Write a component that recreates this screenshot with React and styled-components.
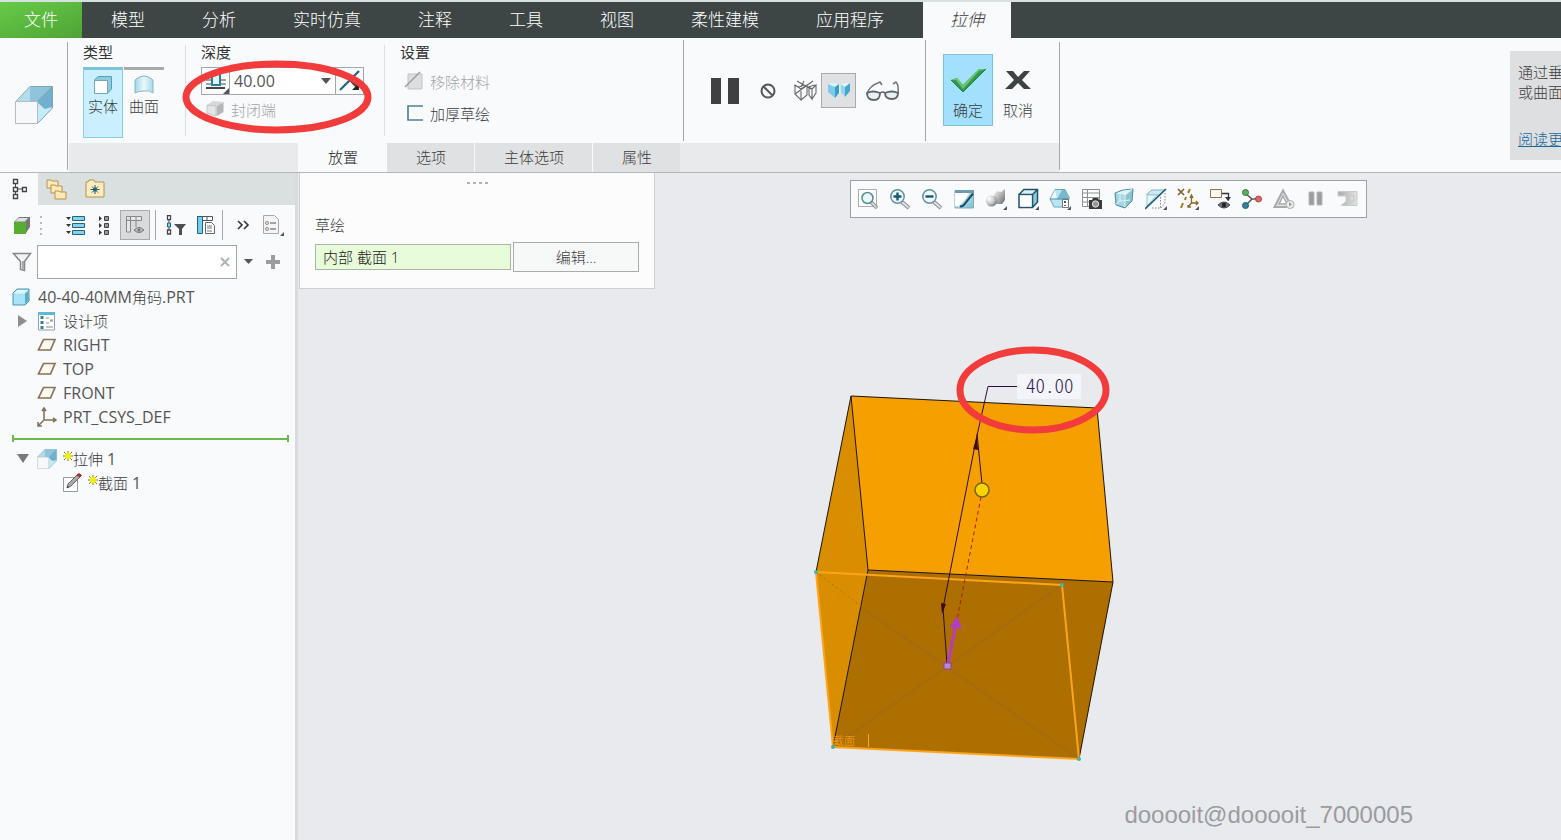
import React from 'react';
import styled, { createGlobalStyle, css } from 'styled-components';

const GlobalStyle = createGlobalStyle`
    *{box-sizing:border-box;}
    body{margin:0;background:#e8eaed;overflow:hidden;}
    body, button, input{font-family:"Open Sans", "Noto Sans CJK SC", sans-serif;font-size:15px;font-weight:300;color:#3c3c3c;}
    button{border:0;padding:0;background:none;cursor:pointer;}
    svg{display:block;flex:none;}
`;

const Page = styled.div`
    display:flex;flex-direction:column;min-height:100vh;border-top:2px solid #d8e1e1;
`;

/* menu bar */
const MenuBar = styled.nav`
    display:flex;column-gap:1px;height:36px;background:#3d4545;
`;
const MenuTab = styled.button`
    padding:0 28px;font-size:17px;line-height:36px;color:#fff;white-space:nowrap;
    ${({ $kind }) => $kind === 'file' && css`
        padding:0 24px;background:linear-gradient(160deg, #67cb47, #4ea336);
    `}
    ${({ $kind }) => $kind === 'active' && css`
        padding:0 27px;margin-left:10px;background:#f8fafc;color:#3c3c3c;font-style:italic;
    `}
`;

/* ribbon */
const Ribbon = styled.header`
    display:flex;height:135px;background:#f8fafc;border-bottom:1px solid #b4b8ba;
`;
const FeatureCell = styled.div`
    display:flex;align-items:center;justify-content:center;width:67px;
`;
const Rule = styled.div`
    width:1px;margin:${({ $m }) => $m || '4px 0 2px'};background:${({ $light }) => $light ? '#dcdfe1' : '#a3a7a9'};
`;
const RibbonBody = styled.div`
    display:flex;flex-direction:column;width:991px;
`;
const Groups = styled.div`
    display:flex;flex:1;
`;
const Group = styled.section`
    position:relative;display:flex;flex-direction:column;width:${({ $w }) => $w}px;padding:4px 0 0 15px;
`;
const GroupTitle = styled.h2`
    margin:0 0 5px;font-size:15px;line-height:20px;font-weight:400;color:#333;
`;
const TypeButtons = styled.div`
    display:flex;column-gap:1px;
`;
const TypeButton = styled.button`
    display:flex;flex-direction:column;align-items:center;width:40px;height:71px;padding-top:3px;
    line-height:20px;border-top:3px solid #a9a9a9;
    ${({ $on }) => $on && css`
        border:1px solid #8acbe2;border-top:3px solid #7cc4dd;background:#caf0ff;
    `}
`;
const DepthBox = styled.div`
    display:flex;width:163px;height:28px;border:1px solid #a3a7a9;background:#fff;
`;
const DepthButton = styled.button`
    display:flex;align-items:center;justify-content:center;width:28px;background:#f8fafc;
    &:first-child{border-right:1px solid #a3a7a9;}
    &:last-child{border-left:1px solid #a3a7a9;}
`;
const DepthInput = styled.input`
    flex:1;min-width:0;padding:0 4px;border:0;background:none;outline:0;font-size:16px;font-weight:400;color:#555;
`;
const Caret = styled.button`
    display:flex;align-items:center;justify-content:center;width:18px;
`;
const OptionButton = styled.button`
    display:flex;align-items:center;column-gap:5px;height:32px;padding:0 0 4px 4px;white-space:nowrap;
    color:${({ disabled }) => disabled ? '#a3a6a7' : '#3c3c3c'};
`;
const DepthMark = styled.svg`
    position:absolute;left:-4px;top:21px;pointer-events:none;
`;
const Preview = styled.div`
    display:flex;align-items:center;width:241px;padding-left:19px;
`;
const PreviewButton = styled.button`
    display:flex;align-items:center;justify-content:center;width:${({ $w }) => $w || 35}px;height:35px;
    ${({ $on }) => $on && css`border:1px solid #a8aaab;background:#dfe1e2;`}
`;
const Finish = styled.div`
    display:flex;padding:16px 0 0 17px;
`;
const FinishButton = styled.button`
    display:flex;flex-direction:column;align-items:center;justify-content:space-between;
    width:50px;height:72px;padding:10px 0 4px;line-height:22px;border:1px solid transparent;
    ${({ $on }) => $on && css`background:#a3e0fd;border-color:#7cc0df;`}
`;
const DashTabs = styled.div`
    display:flex;height:29px;margin-left:1px;padding-left:229px;background:#e8eaeb;
`;
const DashTab = styled.button`
    padding:0 28px 0 29px;border-left:1px solid #f8fafc;line-height:29px;
    background:${({ $on }) => $on ? '#f8fafc' : '#dfe1e2'};color:${({ $on }) => $on ? '#222' : '#3c3c3c'};
`;
const Spacer = styled.div`
    flex:1;
`;
const Help = styled.aside`
    display:flex;flex-direction:column;justify-content:space-between;width:51px;height:109px;margin-top:13px;
    padding:11px 0 11px 8px;overflow:hidden;white-space:nowrap;line-height:20px;background:#dddfe0;
    & p{margin:0;}
    & a{color:#1a6897;}
`;

/* model tree */
const Workspace = styled.div`
    display:flex;flex:1;
`;
const Sidebar = styled.aside`
    width:298px;border-right:3px solid #d9dcde;background:#f8fafc;
`;
const SideTabs = styled.div`
    display:flex;height:32px;background:#dadfdf;
`;
const SideTab = styled.button`
    display:flex;align-items:center;justify-content:center;width:38px;
    background:${({ $on }) => $on ? '#f8fafc' : 'transparent'};
`;
const TreeTools = styled.div`
    display:flex;align-items:center;column-gap:8px;height:40px;padding-left:12px;
`;
const TreeTool = styled.button`
    display:flex;align-items:center;justify-content:center;width:${({ $w }) => $w || 22}px;height:30px;
    ${({ $on }) => $on && css`border:1px solid #a8aaab;background:#d8dadb;`}
`;
const ToolRule = styled.div`
    width:1px;height:30px;margin:0 1px 0 -3px;background:#a3a7a9;
`;
const FilterRow = styled.div`
    display:flex;align-items:center;padding-left:12px;
`;
const FilterBox = styled.label`
    display:flex;align-items:center;width:200px;height:34px;margin:0 6px 0 5px;padding-right:5px;
    border:1px solid #a3a7a9;background:#fff;
    & input{flex:1;min-width:0;border:0;outline:0;background:none;}
`;
const FilterButton = styled.button`
    display:flex;align-items:center;justify-content:center;width:${({ $w }) => $w || 10}px;margin-right:13px;
`;
const Tree = styled.ul`
    margin:0;padding:6px 0 0 12px;list-style:none;
`;
const TreeRow = styled.li`
    display:flex;align-items:center;height:24px;padding-left:${({ $level }) => $level * 25}px;
    line-height:24px;white-space:nowrap;
    & small{font-size:16px;font-weight:400;color:#555;}
`;
const Twisty = styled.button`
    display:flex;align-items:center;justify-content:center;width:25px;height:24px;padding-right:4px;margin-left:-25px;
`;
const Glyph = styled.span`
    display:flex;align-items:center;width:26px;
`;
const InsertLine = styled.li`
    display:flex;align-items:center;height:7px;margin:6px 6px 5px 0;
    border:solid #6cb94c;border-width:0 2px;
    &::before{content:"";flex:1;height:2px;background:#6cb94c;}
`;

/* graphics area */
const Stage = styled.main`
    position:relative;display:flex;align-items:flex-start;flex:1;padding-left:1px;overflow:hidden;
`;
const Model = styled.svg`
    position:absolute;left:0;top:0;
`;
const Placement = styled.section`
    position:relative;width:356px;height:116px;padding:7px 15px;border:1px solid #cdd1d3;border-top:0;background:#fcfcfc;
`;
const Grip = styled.div`
    display:flex;justify-content:center;column-gap:3px;height:34px;padding-top:2px;
    & i{width:3px;height:2px;background:#b0b2b3;}
`;
const SketchLabel = styled.label`
    display:block;line-height:22px;
`;
const SketchRow = styled.div`
    display:flex;align-items:center;column-gap:2px;margin-top:6px;
    & input{width:196px;height:26px;padding:0 7px 2px;border:1px solid #a9b5a9;background:#e8fcda;color:#222;outline:0;}
    & button{width:126px;height:30px;padding-bottom:2px;border:1px solid #a9acae;background:#f7f8f8;}
`;
const ViewArea = styled.div`
    position:relative;display:flex;justify-content:center;flex:1;padding-top:7px;
`;
const ViewBar = styled.div`
    display:flex;align-items:center;height:38px;padding:0 2px 0 1px;border:1px solid #9da1a4;background:#f8fafc;
`;
const ViewButton = styled.button`
    display:flex;align-items:center;justify-content:center;width:32px;height:32px;
`;
const Watermark = styled.div`
    position:absolute;right:148px;bottom:10px;font:24px/30px "Liberation Sans", Arial, sans-serif;color:#9b9c9e;
`;

const Svg = ({ w = 22, h = w, children }) => (
    <svg width={w} height={h} viewBox={`0 0 ${w} ${h}`} fill="none" aria-hidden="true">{children}</svg>
);

const ExtrudeIcon = ({ size = 38 }) => (
    <svg width={size} height={size} viewBox="0 0 38 38" fill="none" aria-hidden="true">
        <path d="M0 16 15 0H38V22L22 38H0z" fill="#cfe9f3" />
        <path d="M3 15 16 1H37L23 15z" fill="#8fc4da" />
        <path d="M3 15 15 2V15z" fill="#b4dcec" />
        <path d="M23 15 37 1V21L31 24 23 17z" fill="#6fafcf" />
        <path d="M23 24 30 23 36 21 23 35z" fill="#c0edf9" />
        <path d="M15 .5H37.500V22L22.500 37.500M37 1 22 15.500M15 .5 .5 16" stroke="#7fa3b3" />
        <path d="M.5 15.500H22.500V37.500H.5z" fill="#f6f8fa" stroke="#b4bcc1" />
    </svg>
);

const Arrow = ({ x = 19, y = 18 }) => <path d={`M${x + 3} ${y}v4h-4z`} fill="#555" />;

const DepthIcon = () => (
    <Svg w={26} h={26}>
        <path d="M3 12h20M3 16h20" stroke="#9aa3a8" strokeWidth="2" />
        <path d="M9 5v12h8V5" fill="#e3f5fa" stroke="#2a7f99" strokeWidth="2" />
        <path d="M3 20h19" stroke="#444" strokeWidth="2" />
        <path d="M26 20v6h-6z" fill="#555" />
    </Svg>
);
const FlipIcon = () => (
    <Svg w={26} h={24}>
        <path d="M3 21 22 2" stroke="#1e6478" strokeWidth="2.200" />
        <path d="m11 9 9 9" stroke="#333" strokeWidth="2.200" />
        <path d="M22 14v7h-7z" fill="#222" />
    </Svg>
);
const Star = () => (
    <Svg w={10} h={17}>
        <path d="M5 0v10M0 5h10M1 1l8 8M9 1 1 9" stroke="#77773a" />
        <path d="M5 1.500v7M1.500 5h7M2.500 2.500l5 5M7.500 2.500l-5 5" stroke="#f6ee00" strokeWidth="1.700" />
    </Svg>
);
const Plane = () => (
    <Svg w={20} h={14}><path d="M6.500 1.500H18L13.500 12H1.500z" fill="#fffaf0" stroke="#87735a" strokeWidth="1.700" /></Svg>
);
const PartIcon = () => (
    <Svg w={18}>
        <path d="M1 5 5 1H17V13L13 17H1z" fill="#a9e3f8" stroke="#4a94ae" />
        <path d="M2 5.500 5.500 2H16L12 5.500z" fill="#e2f7fd" />
        <path d="M13 6 16.500 2.500V12.500L13 16z" fill="#5aaac9" />
    </Svg>
);

const Magnifier = ({ sign }) => (
    <Svg>
        <path d="m13 14 7 6" stroke="#8c8f91" strokeWidth="4" />
        <path d="m13 14 6.500 5.500" stroke="#dfe1e2" strokeWidth="2" />
        <circle cx="8.500" cy="8.500" r="6.700" fill="#eefafd" stroke="#62909f" strokeWidth="1.500" />
        <path d={sign} stroke="#155a76" strokeWidth="2.400" />
    </Svg>
);

const viewTools = [
    ['重新调整', (
        <Svg>
            <path d="M1.500 1.500h18v17h-18z" fill="#fff" stroke="#a9adaf" />
            <path d="m14 14 6 6" stroke="#8c8f91" strokeWidth="3.500" />
            <path d="m14 14 5.500 5.500" stroke="#dfe1e2" strokeWidth="1.500" />
            <circle cx="10.500" cy="10" r="5.500" fill="#e6f7fb" stroke="#57899a" strokeWidth="1.500" />
        </Svg>
    )],
    ['放大', <Magnifier sign="M8.500 4.500v8M4.500 8.500h8" />],
    ['缩小', <Magnifier sign="M4.500 8.500h8" />],
    ['重画', (
        <Svg>
            <defs><linearGradient id="paint" x1="0" y1="0" x2="1" y2="1"><stop offset="0" stopColor="#f4fcff" /><stop offset="1" stopColor="#79bcd0" /></linearGradient></defs>
            <path d="M2 2.500h18.500v17.500H2z" fill="url(#paint)" stroke="#83abb7" />
            <path d="M2 2h19v3H2z" fill="#6c9dad" />
            <path d="M2 18c5 1 8-3 14-13H2z" fill="#fff" />
            <path d="M7 18.500c4 0 4-2 13-13" stroke="#174e63" strokeWidth="2" />
        </Svg>
    )],
    ['渲染选项', (
        <Svg>
            <defs>
                <radialGradient id="ball" cx=".3" cy=".3" r=".8"><stop offset="0" stopColor="#fff" /><stop offset=".5" stopColor="#cfcfcf" /><stop offset="1" stopColor="#777" /></radialGradient>
                <linearGradient id="cone" x1="0" y1="0" x2="1" y2="1"><stop offset="0" stopColor="#fff" /><stop offset="1" stopColor="#666" /></linearGradient>
            </defs>
            <path d="m9 6 3-3 4 1 4-3v11l-3 4H9z" fill="url(#cone)" />
            <circle cx="6.500" cy="13" r="5.500" fill="url(#ball)" /><Arrow />
        </Svg>
    )],
    ['显示样式', (
        <Svg>
            <path d="M2 6 7 1.500H20.500V14L15.500 19.500H2z" fill="#d9f1f8" />
            <path d="M15.500 6 20.500 1.500V14L15.500 19.500z" fill="#8ccbe0" />
            <path d="M2 6.500h13.500v13H2zM2 6.500l5-5h13.500V14l-5 5.500M15.500 6.500l5-5" stroke="#215369" strokeWidth="1.500" /><path d="M3 7.500h11.500v11H3z" fill="#fff" /><Arrow />
        </Svg>
    )],
    ['已保存方向', (
        <Svg>
            <path d="M1 11 6 1.500H16L20 9V11L16 19H5z" fill="#b8e5f2" stroke="#6ba4b7" />
            <path d="M6 2 8 11H1.500z" fill="#edfaff" /><path d="M8 11 13 2h3l4 9z" fill="#78b9cf" /><path d="M1 11h19" stroke="#4b8ba1" />
            <path d="M13.500 11.500h6v8h-6z" fill="#fff" stroke="#777" /><path d="M16 13v2m0 2v1" stroke="#555" strokeWidth="2" /><Arrow />
        </Svg>
    )],
    ['视图管理器', (
        <Svg>
            <path d="M1.500 1.500h17v17h-17zM1.500 5h17M1.500 9.500h17M1.500 14h17M6.500 1.500v17" fill="#fff" stroke="#8c8f91" />
            <path d="M8 12h3l1-2h5l1 2h3v9H8z" fill="#3b3b3b" /><circle cx="14.500" cy="16" r="3.200" fill="#999" stroke="#e2e2e2" />
        </Svg>
    )],
    ['透视图', (
        <Svg>
            <path d="m2 5 8-3 10-1-1 12-7 7L3 17z" fill="#8cc4d6" stroke="#4e8ea5" />
            <path d="m2.500 5.500 10 1.500 7-5.500-9 1z" fill="#e1f6fb" /><path d="M3 6l9 1v12l-8-3z" fill="#a8d7e4" />
            <path d="M12 7v12M12 7l7-6M7 4v9l-4 3m4-3 10-1" stroke="#dff5fb" />
        </Svg>
    )],
    ['截面', (
        <Svg>
            <path d="M2 6 7 2h13L15 7H2z" fill="#cdeaf3" stroke="#7db1c2" /><path d="M2 7h10L2 18z" fill="#e6f7fc" stroke="#9bcad9" />
            <path d="M15.500 9v11H6M20 5v10l-4 5" stroke="#888" strokeDasharray="1.500 1.500" />
            <path d="M0 21 21 1" stroke="#245d76" strokeWidth="1.700" /><Arrow />
        </Svg>
    )],
    ['基准显示过滤器', (
        <Svg>
            <path d="m1 1 6 6m0-6L1 7" stroke="#7a6232" strokeWidth="1.700" />
            <path d="m13 1-2 4m-2 4-1 3m-2 3-2 5" stroke="#a57a20" strokeWidth="2" />
            <path d="M14.500 8v7h6m-6 0L11 19M13 10l1.500-3 1.500 3m3 3 2 2-2 2m-8 0v2h3" stroke="#8b6625" strokeWidth="1.300" /><Arrow />
        </Svg>
    )],
    ['注释显示', (
        <Svg>
            <path d="M1.500 1.500h11v8h-11z" fill="#fff8ed" stroke="#87735a" /><path d="M13 5.500h6.500v7" stroke="#333" strokeWidth="1.300" /><path d="M16 9h6l-3 4z" fill="#333" />
            <path d="M9 17q6-6 12 0-6 6-12 0z" fill="#777" stroke="#444" /><circle cx="15" cy="17" r="2.200" fill="#222" />
        </Svg>
    )],
    ['旋转中心', (
        <Svg>
            <path d="m4 5 7 6h8M11 11l-7 7" stroke="#555" strokeWidth="1.500" />
            <circle cx="4.500" cy="4.500" r="3" fill="#5dac62" stroke="#37793e" /><circle cx="17.500" cy="11" r="3" fill="#e56666" stroke="#a84646" /><circle cx="4.500" cy="17.500" r="3" fill="#35809f" stroke="#245d76" />
        </Svg>
    )],
    ['模拟', (
        <Svg>
            <path d="M10 2.500 19 19H1.500z" fill="#e7e8e8" stroke="#a7a9aa" strokeWidth="2" /><path d="m10 8 4 8H6z" fill="#fff" stroke="#a7a9aa" strokeWidth="1.500" />
            <circle cx="17" cy="16.500" r="4" fill="#eee" stroke="#aaa" /><path d="m16 14 3 2.500-3 2z" fill="#999" />
        </Svg>
    )],
    ['暂停', <Svg><path d="M4 4h5v13H4zM12 4h5v13h-5z" fill="#9b9c9d" stroke="#b8b9ba" /></Svg>],
    ['回放', (
        <Svg>
            <defs><linearGradient id="tape"><stop offset="0" stopColor="#aaa" /><stop offset="1" stopColor="#e3e3e3" /></linearGradient></defs>
            <path d="M1 3.500h19v14H4l5-4V8H1z" fill="url(#tape)" stroke="#c9cacb" /><path d="M13 8h4v5h-4z" fill="#ddd" stroke="#c4c4c4" />
        </Svg>
    )],
];

const menus = ['模型', '分析', '实时仿真', '注释', '工具', '视图', '柔性建模', '应用程序'];
const dashTabs = ['放置', '选项', '主体选项', '属性'];
const planes = ['RIGHT', 'TOP', 'FRONT'];

const DepthGroup = () => (
    <Group $w={199}>
        <GroupTitle>深度</GroupTitle>
        <DepthBox>
            <DepthButton aria-label="深度类型"><DepthIcon /></DepthButton>
            <DepthInput aria-label="深度" defaultValue="40.00" />
            <Caret aria-label="最近的值"><Svg w={10} h={6}><path d="M0 0h10L5 6z" fill="#555" /></Svg></Caret>
            <DepthButton aria-label="反向"><FlipIcon /></DepthButton>
        </DepthBox>
        <OptionButton disabled>
            <Svg w={21} h={18}>
                <path d="m2 5 6-4 11 1v10l-7 4-10-3z" fill="#d6d8d9" /><path d="m2 5 9 1v10l-9-3z" fill="#e4e5e6" stroke="#c4c6c7" /><path d="m12 6 6-3v9l-6 4z" fill="#b5b7b8" />
            </Svg>
            封闭端
        </OptionButton>
        <DepthMark width="190" height="76" viewBox="0 0 190 76" fill="none">
            <ellipse cx="95" cy="38" rx="91" ry="33" stroke="#f23c3c" strokeWidth="7" />
        </DepthMark>
    </Group>
);

const RibbonBar = () => (
    <Ribbon>
        <FeatureCell><ExtrudeIcon /></FeatureCell>
        <Rule />
        <RibbonBody>
            <Groups>
                <Group $w={118}>
                    <GroupTitle>类型</GroupTitle>
                    <TypeButtons>
                        <TypeButton $on>
                            <Svg w={20} h={23}><path d="M1.500 7 5 3.500H18.500V16L14.500 20.500H1.500z" fill="#8dcbdf" stroke="#5a9db4" /><path d="M1.500 7.500h13v13h-13z" fill="#fff" stroke="#7ba6b5" /></Svg>
                            实体
                        </TypeButton>
                        <TypeButton>
                            <Svg w={22} h={23}>
                                <defs><linearGradient id="sheet"><stop offset="0" stopColor="#9fd8ea" /><stop offset=".5" stopColor="#e9f9fd" /><stop offset="1" stopColor="#a3d9ea" /></linearGradient></defs>
                                <path d="M2 7q9-8 18 0v13q-3-3-9-2-6 0-9 2z" fill="url(#sheet)" stroke="#8fb4c0" />
                            </Svg>
                            曲面
                        </TypeButton>
                    </TypeButtons>
                </Group>
                <Rule $light $m="7px 0 7px -1px" />
                <DepthGroup />
                <Rule $light $m="7px 0 7px -1px" />
                <Group $w={299}>
                    <GroupTitle>设置</GroupTitle>
                    <OptionButton disabled>
                        <Svg w={21} h={20}><path d="M4 3h14v15H4z" fill="#dcdedf" stroke="#c0c2c3" /><path d="M1 16 16 1" stroke="#9b9d9e" strokeWidth="1.500" /></Svg>
                        移除材料
                    </OptionButton>
                    <OptionButton>
                        <Svg w={21} h={20}><path d="M19 3H4v14h15" stroke="#4f8399" strokeWidth="1.700" /></Svg>
                        加厚草绘
                    </OptionButton>
                </Group>
                <Rule $m="2px 0 2px -1px" />
                <Preview>
                    <PreviewButton $w={44} aria-label="暂停"><Svg w={30} h={28}><path d="M1 1h10v26H1zM18 1h11v26H18z" fill="#3f4041" /></Svg></PreviewButton>
                    <PreviewButton $w={41} aria-label="无预览"><Svg w={16}><circle cx="8" cy="8" r="6.500" stroke="#555" strokeWidth="2" /><path d="m3.500 3.500 9 9" stroke="#555" strokeWidth="2" /></Svg></PreviewButton>
                    <PreviewButton $w={33} aria-label="分离">
                        <Svg w={26} h={22}>
                            <path d="m2 5 5 2 5-2 4 2 7-2M3 5v9l6 6V9L3 5m6 4 6-4v10l-6 5M17 7v8l3 4V9l-3-2m3 2 4-4v8l-4 6M5 1l14 8M21 1 3 14M12 1l-3 6" stroke="#66686a" strokeWidth="1.100" />
                        </Svg>
                    </PreviewButton>
                    <PreviewButton $on aria-label="连接">
                        <Svg w={24} h={18}>
                            <path d="m1 2 5-1 7 1v9l-5 5-7-6z" fill="#d9f4fd" /><path d="m1 2 7 3v11l-7-6z" fill="#7dcbea" /><path d="m8 5 4-3v9l-4 5z" fill="#3b9cc4" />
                            <path d="m14 2 9-1v8l-5 6-4-5z" fill="#e5f8fe" /><path d="m14 2 4 3v10l-4-5z" fill="#8fd5ee" /><path d="m18 5 5-4v8l-5 6z" fill="#45a5ca" />
                        </Svg>
                    </PreviewButton>
                    <PreviewButton $w={54} aria-label="预览">
                        <Svg w={36} h={22}>
                            <path d="M2 14Q4 6 15 2l2 3M33 14q1-9-2-12l-3 2" stroke="#77797a" strokeWidth="1.600" />
                            <path d="M2 13q6-3 13 0 0 7-6 7-7 0-7-7zM20 13q7-3 13 0 0 6-6 6-7 0-7-6z" fill="#e8f2f6" stroke="#626466" strokeWidth="1.800" /><path d="M15 13q3-2 5 0" stroke="#626466" strokeWidth="1.500" />
                        </Svg>
                    </PreviewButton>
                </Preview>
                <Rule $m="2px 0" />
                <Finish>
                    <FinishButton $on>
                        <Svg w={38} h={30}><path d="m2 15 6-2 6 7L30 4h7L14 27z" fill="#2f9a52" /><path d="m2 15 6-2 6 7L30 4h7l-7 2-16 18-7-9z" fill="#6cc56d" /><path d="M37 4 14 27 2 15" stroke="#267a43" /></Svg>
                        确定
                    </FinishButton>
                    <FinishButton>
                        <Svg w={26} h={30}><path d="M1 6h7l5 6 6-6h6l-8 9 9 9h-7l-6-6-6 6H0l9-9z" fill="#3f4243" /></Svg>
                        取消
                    </FinishButton>
                </Finish>
            </Groups>
            <DashTabs role="tablist">
                {dashTabs.map((name, index) => <DashTab key={name} role="tab" $on={index === 0}>{name}</DashTab>)}
            </DashTabs>
        </RibbonBody>
        <Rule />
        <Spacer />
        <Help>
            <p>通过垂<br />或曲面</p>
            <a href="#help">阅读更</a>
        </Help>
    </Ribbon>
);

const ModelTree = () => (
    <Sidebar>
        <SideTabs>
            <SideTab $on aria-label="模型树">
                <Svg w={16} h={22}><path d="M4.500 6v4m0 3v3M7 11h4" stroke="#444" /><path d="M2.500 1.500h4v4h-4zM2.500 9.500h4v4h-4zM2.500 16.500h4v4h-4zM11.500 9.500h4v4h-4z" fill="#fff" stroke="#444" strokeWidth="1.400" /></Svg>
            </SideTab>
            <SideTab aria-label="文件夹浏览器">
                <Svg w={22} h={22}>
                    {[[1, 1], [5, 6], [9, 12]].map(([x, y]) => <path key={x} d={`M${x} ${y + 1}h4l1 1h6v7h-11z`} fill="#ffeab5" stroke="#b3934f" />)}
                </Svg>
            </SideTab>
            <SideTab aria-label="收藏夹">
                <Svg w={22} h={20}><path d="M2 3h2l1-2h5l1 2h9v15H2z" fill="#ffebbd" stroke="#b3934f" /><path d="M11 6v9M6.500 10.500h9M8 7.500l6 6M14 7.500l-6 6" stroke="#1f5f79" /><circle cx="11" cy="10.500" r="2" fill="#1f5f79" /></Svg>
            </SideTab>
        </SideTabs>
        <TreeTools>
            <TreeTool $w={20} aria-label="显示"><Svg w={18} h={20}><path d="m1 7 5-5h11v10l-4 6z" fill="#777" /><path d="M2 6.500 6 3h9l-3 3.500z" fill="#e1e1e1" /><path d="M1 7h12v12H1z" fill="#56ae31" /></Svg></TreeTool>
            <TreeTool $w={16} aria-label="拖动"><Svg w={16} h={20}><path d="M1 1v2m0 4v2m0 4v2m0 3v2" stroke="#bbb" strokeWidth="2" /></Svg></TreeTool>
            <TreeTool $w={24} aria-label="全部展开">
                <Svg w={24} h={20}>{[0, 7, 14].map((y) => <g key={y}><path d={`M2 ${y + 2}h5l-2.500 3z`} fill="#333" /><path d={`M8.500 ${y + 1.5}h12v4h-12z`} fill="#86d2ee" stroke="#22647c" /></g>)}</Svg>
            </TreeTool>
            <TreeTool $w={16} aria-label="全部折叠">
                <Svg w={16} h={20}>{[0, 7, 14].map((y) => <g key={y}><path d={`M3 ${y + 1}v5l3-2.500z`} fill="#333" /><path d={`M8.500 ${y + 1.5}h4v4h-4z`} fill="#999" stroke="#444" /></g>)}</Svg>
            </TreeTool>
            <TreeTool $w={30} $on aria-label="树列">
                <Svg w={20}><path d="M1.500 1.500h15v4h-15zM1.500 5v12h4V1M11 1v11" fill="#e7e7e7" stroke="#85888a" /><path d="M9 15q5-5 10 0-5 5-10 0z" fill="#bbb" stroke="#777" /><circle cx="14" cy="15" r="1.500" fill="#777" /></Svg>
            </TreeTool>
            <ToolRule />
            <TreeTool aria-label="树过滤器">
                <Svg w={20}><path d="M3 5v10" stroke="#444" /><path d="M1.500.700h3v4h-3zM1.500 15h3v4h-3z" fill="#fff" stroke="#444" strokeWidth="1.300" /><path d="M1.500 8h3v4h-3z" fill="#86d2ee" stroke="#22647c" /><path d="M8 9h12l-4 5v6h-3v-6z" fill="#4c4e4f" /></Svg>
            </TreeTool>
            <TreeTool aria-label="树设置">
                <Svg w={22}><path d="M2.500 2.500h15v4h-15z" fill="#fff" stroke="#555" /><path d="M7 2v4m5-4v4" stroke="#555" /><path d="M2.500 2.500h5v17h-5z" fill="#79cdec" stroke="#22647c" /><path d="M10.500 8.500h6l3 3v8h-9z" fill="#fff" stroke="#666" /><path d="M12 12h5m-5 2h5m-5 3h5" stroke="#777" /></Svg>
            </TreeTool>
            <ToolRule />
            <TreeTool aria-label="更多"><Svg w={14} h={12}><path d="m2 2 4 4-4 4m6-8 4 4-4 4" stroke="#333" strokeWidth="1.600" /></Svg></TreeTool>
            <TreeTool aria-label="信息"><Svg><path d="M1.500 1.500h11l4 4v14h-15z" fill="#f4f4f4" stroke="#a9a9a9" /><circle cx="5" cy="9" r="1.500" stroke="#888" /><circle cx="5" cy="15" r="1.500" stroke="#888" /><path d="M8 9h6m-6 6h6" stroke="#888" strokeWidth="1.500" /><Arrow /></Svg></TreeTool>
        </TreeTools>
        <FilterRow>
            <Svg w={20} h={20}><path d="M1.500 1.500h17l-6 8v9l-4-1v-8z" fill="#f3f3f3" stroke="#858789" strokeWidth="1.500" /><path d="M11 9v9" stroke="#aaa" strokeWidth="2" /></Svg>
            <FilterBox>
                <input aria-label="过滤" />
                <Svg w={12}><path d="m2 2 8 8m0-8-8 8" stroke="#aeb0b1" strokeWidth="1.800" /></Svg>
            </FilterBox>
            <FilterButton aria-label="过滤选项"><Svg w={9} h={6}><path d="M0 0h9L4.500 5z" fill="#555" /></Svg></FilterButton>
            <FilterButton $w={14} aria-label="添加"><Svg w={14}><path d="M7 0v14M0 7h14" stroke="#9b9d9e" strokeWidth="4" /></Svg></FilterButton>
        </FilterRow>
        <Tree>
            <TreeRow $level={0}><Glyph><PartIcon /></Glyph><small>40-40-40MM</small>角码<small>.PRT</small></TreeRow>
            <TreeRow $level={1}>
                <Twisty aria-label="展开"><Svg w={10} h={12}><path d="M0 0v12l9-6z" fill="#8c8e8f" /></Svg></Twisty>
                <Glyph>
                    <Svg w={19} h={20}><path d="M1.500 2h16v17h-16z" fill="#fff" stroke="#8ca2ac" /><path d="M1 1h17v3H1z" fill="#5eb8d8" /><path d="M5 5v13" stroke="#35809f" strokeWidth="3" strokeDasharray="3 2" /><path d="M9 7h3m1 2h3m-7 3h3m1-2h3m-7 6h7" stroke="#888" /></Svg>
                </Glyph>
                设计项
            </TreeRow>
            {planes.map((name) => <TreeRow key={name} $level={1}><Glyph><Plane /></Glyph><small>{name}</small></TreeRow>)}
            <TreeRow $level={1}>
                <Glyph><Svg w={20} h={20}><path d="M7 1v12h12M7 13l-6 6M5 4l2-3 2 3m7 7 3 2-3 2M1 15v4h4" stroke="#87735a" strokeWidth="1.600" /></Svg></Glyph>
                <small>PRT_CSYS_DEF</small>
            </TreeRow>
            <InsertLine />
            <TreeRow $level={1}>
                <Twisty aria-label="折叠"><Svg w={12} h={10}><path d="M0 0h12L6 9z" fill="#77797a" /></Svg></Twisty>
                <Glyph><ExtrudeIcon size={20} /></Glyph><Star />拉伸&nbsp;<small>1</small>
            </TreeRow>
            <TreeRow $level={2}>
                <Glyph><Svg w={20} h={20}><path d="M1.500 4.500h14v14h-14z" fill="#fff" stroke="#999" /><path d="m5 15 1-4 9-9 3 2-9 9z" fill="#aaa" stroke="#666" /><path d="m15 2 2-1.500 2.500 2L18 4z" fill="#b5372d" stroke="#8f2d25" /><path d="m5 15 .5-2L7 14z" fill="#222" /></Svg></Glyph>
                <Star />截面&nbsp;<small>1</small>
            </TreeRow>
        </Tree>
    </Sidebar>
);

const DimText = styled.text`
    font-family:"Noto Sans CJK SC", sans-serif;font-size:19px;font-weight:300;font-feature-settings:"hwid";fill:#2d1a4a;
`;
const SketchText = styled.text`
    font-family:"Noto Sans CJK SC", sans-serif;font-size:11px;fill:#fca51b;
`;

const corners = [[816, 572], [1062, 585], [1079, 759], [833, 747]];

/* coordinates are those of the window, so the view box starts at the stage's corner */
const Block = () => (
    <Model width="1263" height="667" viewBox="298 173 1263 667" fill="none">
        <path d="M851 396 1097 408 1113 582 868 570z" fill="#f5a000" />
        <path d="M851 396 868 570 833 747 816 572z" fill="#d98e00" />
        <path d="M868 570 1113 582 1079 759 833 747z" fill="#ad6f00" />
        <path d="M851 396 1097 408 1113 582 868 570zM851 396 816 572M868 570 833 747M1113 582 1079 759" stroke="#1d1208" />
        <path d="M862 608 1079 759M833 747 1062 585" stroke="#a66a12" strokeWidth="2" />
        <path d="m816 572 46 35" stroke="#b8682e" strokeDasharray="2 3" />
        <path d="M816 572 1062 585 1079 759 833 747z" stroke="#fca51b" strokeWidth="2" />
        {corners.map(([x, y]) => <circle key={x} cx={x} cy={y} r="2" fill="#35b5ae" />)}
        <path d="m981 497-24 123" stroke="#a8201a" strokeDasharray="4 3" />
        <path d="M1017 386.500H988L976 440 943 608l4 56M977 434l5 50" stroke="#2d0a3a" />
        <path d="m977 437-4 12 5 1zM942 614l-1-11 5 1z" fill="#3a0a20" />
        <path d="m948 664 7-36" stroke="#b53cc4" strokeWidth="3" /><path d="m957 616-7 11 12 2z" fill="#b53cc4" />
        <path d="M944 663h7v6h-7z" fill="#b78bd0" stroke="#8d3ea6" />
        <circle cx="982" cy="490" r="7" fill="#fad400" stroke="#756414" strokeWidth="1.500" />
        <path d="M1017 374h64v25h-64z" fill="#f4f5fb" />
        <DimText x="1026" y="393">40.00</DimText>
        <SketchText x="833" y="745">截面</SketchText>
        <path d="M868.500 734v13" stroke="#fca51b" />
        <ellipse cx="1033" cy="390" rx="73" ry="40" stroke="#f23c3c" strokeWidth="7" />
    </Model>
);

const App = () => {
    return (
        <Page>
            <GlobalStyle />
            <MenuBar>
                <MenuTab $kind="file">文件</MenuTab>
                {menus.map((name) => <MenuTab key={name}>{name}</MenuTab>)}
                <MenuTab $kind="active">拉伸</MenuTab>
            </MenuBar>
            <RibbonBar />
            <Workspace>
                <ModelTree />
                <Stage>
                    <Block />
                    <Placement>
                        <Grip><i /><i /><i /><i /></Grip>
                        <SketchLabel htmlFor="sketch">草绘</SketchLabel>
                        <SketchRow>
                            <input id="sketch" defaultValue="内部 截面 1" />
                            <button>编辑...</button>
                        </SketchRow>
                    </Placement>
                    <ViewArea>
                        <ViewBar>
                            {viewTools.map(([name, icon]) => <ViewButton key={name} aria-label={name}>{icon}</ViewButton>)}
                        </ViewBar>
                    </ViewArea>
                    <Watermark>dooooit@dooooit_7000005</Watermark>
                </Stage>
            </Workspace>
        </Page>
    );
}

export default App;
